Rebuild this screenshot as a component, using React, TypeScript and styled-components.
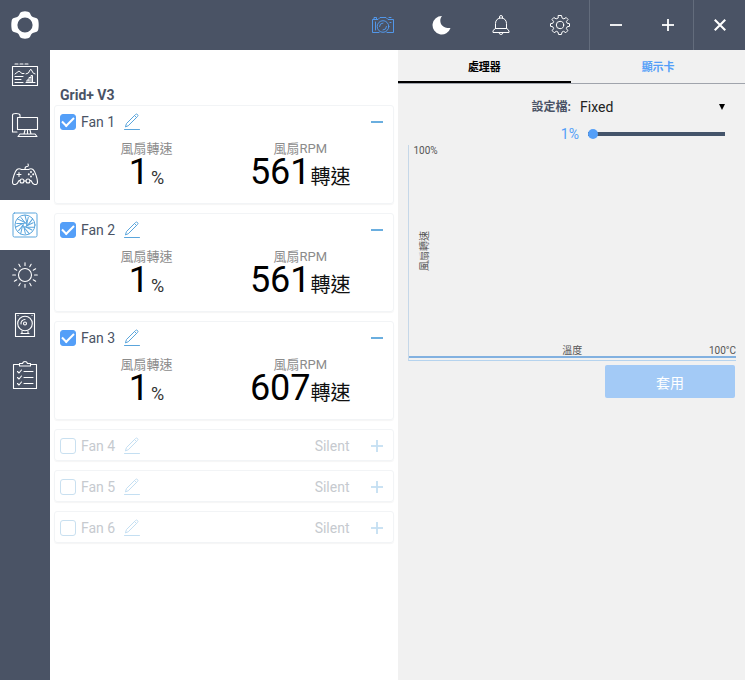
import React, { useState } from "react";
import styled, { createGlobalStyle, css } from "styled-components";

const slate = "#4a5365";
const blue = "#549ff8";
const skyBlue = "#5aa5dc";

const GlobalStyle = createGlobalStyle`
  * { box-sizing: border-box; }
  body {
    margin: 0;
    font-family: Roboto, "Noto Sans CJK TC", sans-serif;
    font-size: 14px;
    color: ${slate};
    background: #fff;
  }
  button, select, input { font: inherit; color: inherit; margin: 0; }
  button { border: 0; padding: 0; background: none; cursor: pointer; }
  svg { display: block; }
`;

const Shell = styled.div`
  min-height: 100vh;
  display: flex;
  flex-direction: column;
`;

const TopBar = styled.header`
  height: 50px;
  display: flex;
  background: ${slate};
  color: #fff;
`;

const Brand = styled.a`
  width: 50px;
  display: grid;
  place-items: center;
  margin-right: auto;
`;

const ToolButton = styled.button<{ $active?: boolean }>`
  width: 59px;
  display: grid;
  place-items: center;
  color: ${(p) => (p.$active ? blue : "#fff")};
`;

const WindowButton = styled.button<{ $divided?: boolean }>`
  width: 52px;
  display: grid;
  place-items: center;
  border-left: 1px solid ${(p) => (p.$divided ? "#636c7c" : "transparent")};
`;

const Body = styled.div`
  flex: 1;
  display: flex;
`;

const SideNav = styled.nav`
  width: 50px;
  flex: none;
  display: flex;
  flex-direction: column;
  background: ${slate};
`;

const NavLink = styled.a<{ $active?: boolean }>`
  height: 50px;
  display: grid;
  place-items: center;
  color: ${(p) => (p.$active ? skyBlue : "#fff")};
  background: ${(p) => (p.$active ? "#fff" : "transparent")};
`;

const Columns = styled.main`
  flex: 1;
  display: grid;
  grid-template-columns: 1fr 1fr;
`;

const FanPanel = styled.section`
  padding: 36px 4px 16px;
`;

const DeviceTitle = styled.h1`
  margin: 0;
  padding-left: 6px;
  font-size: 14px;
  line-height: 19px;
  font-weight: 700;
`;

const FanList = styled.div`
  display: flex;
  flex-direction: column;
  gap: 9px;
`;

const FanCard = styled.article<{ $enabled: boolean }>`
  border: 1px solid #f2f4f6;
  border-radius: 3px;
  box-shadow: 0 1px 1px #f6f6f6;
  padding: 0 8px 0 5px;
  ${(p) =>
    p.$enabled
      ? css`
          height: 99px;
        `
      : css`
          height: 32px;
          color: #c6cacf;
        `}
`;

const FanHead = styled.div`
  height: 32px;
  display: flex;
  align-items: center;
`;

const FanLabel = styled.label`
  display: flex;
  align-items: center;
  gap: 5px;
  width: 64px;
`;

const Tick = styled.input`
  appearance: none;
  width: 16px;
  height: 16px;
  border-radius: 3px;
  border: 1px solid #c9e0f0;
  background: #fff;
  display: grid;
  place-items: center;
  &:checked {
    border-color: ${blue};
    background: ${blue};
  }
  &:checked::before {
    content: "";
    width: 10px;
    height: 5px;
    margin-bottom: 3px;
    border: solid #fff;
    border-width: 0 0 2px 2px;
    transform: rotate(-45deg);
  }
`;

const IconButton = styled.button<{ $faded: boolean }>`
  width: 16px;
  height: 18px;
  display: grid;
  place-items: center;
  color: ${skyBlue};
  opacity: ${(p) => (p.$faded ? 0.35 : 1)};
`;

const Mode = styled.span`
  margin-left: auto;
  margin-right: 19px;
`;

const Toggle = styled(IconButton)`
  margin-left: ${(p) => (p.$faded ? "0" : "auto")};
`;

const Readings = styled.dl`
  margin: 0;
  padding-right: 17px;
  display: grid;
  grid-template-columns: 173px 1fr;
`;

const Reading = styled.div`
  display: flex;
  flex-direction: column;
  align-items: center;
`;

const ReadingName = styled.dt`
  padding-top: 3px;
  font-size: 13px;
  line-height: 16px;
  color: #8b8b8b;
`;

const ReadingValue = styled.dd`
  margin: 0;
  display: flex;
  align-items: baseline;
  font-size: 36px;
  line-height: 30px;
  color: #000;
`;

const Unit = styled.small<{ $large?: boolean }>`
  font-size: ${(p) => (p.$large ? "20px" : "18px")};
  line-height: 20px;
  margin-left: ${(p) => (p.$large ? "0" : "2px")};
  color: ${(p) => (p.$large ? "#111" : "#333")};
`;

const CurvePanel = styled.section`
  background: #f1f1f1;
`;

const Tabs = styled.div`
  display: flex;
  height: 34px;
  border-bottom: 1px solid #a0a4ac;
`;

const Tab = styled.button<{ $active: boolean }>`
  flex: 1;
  height: 33px;
  font-size: 11px;
  font-weight: 700;
  color: ${(p) => (p.$active ? "#000" : blue)};
  border-bottom: 2px solid ${(p) => (p.$active ? "#000" : "transparent")};
`;

const Settings = styled.div`
  padding: 13px 20px 0 10px;
  display: grid;
  grid-template-columns: 1fr 145px;
  align-items: center;
  justify-items: end;
`;

const ProfileLabel = styled.label`
  font-size: 12px;
  line-height: 20px;
  font-weight: 700;
  padding-right: 9px;
`;

const SelectWrap = styled.div`
  width: 145px;
  height: 20px;
  display: flex;
  align-items: center;
  color: #222;
  svg { margin-left: -6px; pointer-events: none; }
`;

const Select = styled.select`
  appearance: none;
  flex: 1;
  border: 0;
  padding: 0;
  background: none;
  line-height: 20px;
`;

const SpeedValue = styled.output`
  font-size: 14px;
  line-height: 34px;
  padding-right: 1px;
  color: ${blue};
`;

const Slider = styled.input`
  appearance: none;
  width: 137px;
  height: 10px;
  background: none;
  &::-webkit-slider-runnable-track {
    height: 4px;
    background: #44546a;
  }
  &::-webkit-slider-thumb {
    appearance: none;
    width: 10px;
    height: 10px;
    margin-top: -3px;
    border-radius: 50%;
    background: ${blue};
  }
`;

const Chart = styled.figure`
  height: 216px;
  margin: -6px 9px 0 10px;
  display: flex;
  flex-direction: column;
  justify-content: space-between;
  border-left: 1px solid #c5d7e8;
  border-bottom: 1px solid #b5d3ee;
  font-size: 10px;
  line-height: 10px;
  color: #555;
`;

const TopMark = styled.span`
  padding: 1px 0 0 5px;
`;

const SpeedAxis = styled.span`
  align-self: flex-start;
  margin-left: 11px;
  writing-mode: vertical-rl;
  text-orientation: sideways;
  transform: rotate(180deg);
`;

const TempAxis = styled.div`
  display: grid;
  grid-template-columns: 1fr auto 1fr;
  margin-bottom: 2px;
  border-bottom: 2px solid #82b1e0;
`;

const TempName = styled.span`
  grid-column: 2;
`;

const TempMax = styled.span`
  justify-self: end;
`;

const Apply = styled.button`
  display: block;
  width: 130px;
  height: 33px;
  margin: 4px 10px 0 auto;
  border-radius: 2px;
  background: #a3caf6;
  color: #fff;
`;

const line = {
  fill: "none",
  stroke: "currentColor",
  strokeWidth: 1.1,
  strokeLinecap: "round" as const,
  strokeLinejoin: "round" as const,
};

const Logo = () => (
  <svg width="28" height="28" viewBox="-14 -14 28 28" aria-hidden="true">
    <path
      fill="#fff"
      fillRule="evenodd"
      d="M-3-13.300Q0-14.100 3-13.300C6.500-12.200 4.500-9.800 7.800-8C9.800-7 12.500-7.500 13.300-4.500Q14.100 0 13.300 4.500C12.500 7.500 9.800 7 7.800 8C4.500 9.800 6.500 12.200 3 13.300Q0 14.100-3 13.300C-6.500 12.200-4.500 9.800-7.800 8C-9.800 7-12.500 7.500-13.300 4.500Q-14.100 0-13.300-4.500C-12.500-7.500-9.800-7-7.800-8C-4.500-9.800-6.500-12.200-3-13.300ZM0-7.600A7.600 7.600 0 1 0 0 7.600A7.600 7.600 0 1 0 0-7.600Z"
    />
  </svg>
);

const Camera = () => (
  <svg width="24" height="20" viewBox="0 0 24 20" {...line} strokeWidth={0.9}>
    <path d="M8 17.500H1.500V4.500H7L9 2.500H15L17 4.500H22.500V17.500H16M3 4V2.500H5.500V4" />
    <circle cx="12" cy="11.500" r="5.800" />
    <path d="M8.500 11.500A3.500 3.500 0 0 1 12 8M15.500 11.500A3.500 3.500 0 0 1 12 15M19 7.500H20M4.500 7V15M18 2.500H20" />
  </svg>
);

const Moon = () => (
  <svg width="20" height="20" viewBox="0 0 20 20">
    <path fill="currentColor" d="M10 1C6.500 5 8 13.500 18.500 13A9.200 9.200 0 1 1 10 1Z" />
  </svg>
);

const Bell = () => (
  <svg width="20" height="22" viewBox="0 0 20 22" {...line} strokeWidth={1}>
    <path d="M8.500 4V3A1.500 1.500 0 0 1 11.500 3V4M4.500 14V9.500C4.500 6 7 4 10 4S15.500 6 15.500 9.500V14L18 17V18.500H2V17ZM4.500 14.500H15.500M8 18.500A2 2 0 0 0 12 18.500" />
  </svg>
);

const Gear = () => (
  <svg width="22" height="22" viewBox="-11 -11 22 22" {...line} strokeWidth={1}>
    <path d="M-1.500-9.500H1.500L2.100-6.900L3.900-6.100L6.200-7.500L8-5.500L6.400-3.500L7.100-1.800L9.500-1.300V1.300L7.100 1.800L6.400 3.500L7.800 5.700L5.800 7.700L3.600 6.300L2 7.100L1.400 9.500H-1.400L-2 7.100L-3.600 6.300L-5.800 7.700L-7.800 5.700L-6.400 3.500L-7.100 1.800L-9.500 1.300V-1.300L-7.100-1.800L-6.400-3.500L-8-5.500L-6.200-7.500L-3.900-6.100L-2.100-6.900Z" />
    <circle r="3.700" />
  </svg>
);

const Cross = ({ kind, size }: { kind: "minus" | "plus" | "close"; size: number }) => (
  <svg width={size} height={size} viewBox="0 0 12 12" fill="none" stroke="currentColor" strokeWidth="1.800">
    {kind === "close" ? <path d="M1.500 1.500L10.500 10.500M10.500 1.500L1.500 10.500" /> : <path d="M0 6H12" />}
    {kind === "plus" && <path d="M6 0V12" />}
  </svg>
);

const Pencil = () => (
  <svg width="16" height="18" viewBox="0 0 16 18" {...line} strokeWidth={1}>
    <path d="M1.500 13.500L2.500 10.500L11.500 1.500Q12.500 .5 13.500 1.500T13.500 3.500L4.500 12.500ZM10.500 2.500L12.500 4.500M.5 16.500H15.500" />
  </svg>
);

const Dashboard = () => (
  <svg width="28" height="26" viewBox="0 0 28 26" {...line}>
    <path d="M1.500 4.500H26.500V23.500H1.500ZM4 2H7M9 2H12M14 2H17" />
    <path d="M4 12L8 9L11 11.500H13M15 12Q18 12 19 8Q20 6 21 9Q22 12 24 12M4 14.500H12M4 17.500H10M4 20.500H12M16 20.500V18H18V20.500M18 18V15.500H20V20.500M20 15.500V13.500H21.500V20.500M15 20.500H24" strokeWidth="1" />
  </svg>
);

const Computer = () => (
  <svg width="28" height="26" viewBox="0 0 28 26" {...line}>
    <path d="M6 20H1.500V3Q1.500 1.500 5 1.500T9 3V5M6.500 5.500H26.500V17.500H6.500ZM14 18L13 22M19 18L20 22M16.500 18V22M9 22H24L26 24.500H7Z" />
  </svg>
);

const Gamepad = () => (
  <svg width="28" height="24" viewBox="0 0 28 24" {...line}>
    <path d="M14 6Q14 3.500 16 3.500T17 1M6 6.500Q8 5 10.500 6.500H17.500Q20 5 22 6.500C24 8 26.500 16 26.500 19Q26.500 22 23.500 21.500Q21.500 21 20 17.500H19M9 17.500H8Q6.500 21 4.500 21.500Q1.500 22 1.500 19C1.500 16 4 8 6 6.500M13 18H15M8 9.500V13.500M6 11.500H10" />
    <circle cx="11" cy="18" r="2" />
    <circle cx="17" cy="18" r="2" />
    <path d="M20 9V9.100M20 13.500V13.600M17.800 11.300V11.400M22.200 11.300V11.400" strokeWidth="1.900" />
  </svg>
);

const Fan = () => (
  <svg width="26" height="26" viewBox="-13 -13 26 26" {...line} strokeWidth={1}>
    <rect x="-12" y="-12" width="24" height="24" rx="1.500" />
    <circle r="10" />
    {[0, 51, 103, 154, 206, 257, 309].map((turn) => (
      <path key={turn} transform={`rotate(${turn})`} d="M2-1.500L0-9.800M0-2.300L-4-7.500" />
    ))}
    <circle r="2" />
  </svg>
);

const Sun = () => (
  <svg width="26" height="26" viewBox="-13 -13 26 26" {...line}>
    <circle r="6.500" />
    {Array.from({ length: 12 }, (_, i) => (
      <path key={i} transform={`rotate(${i * 30})`} d="M0-9.500V-12.300" />
    ))}
  </svg>
);

const Disk = () => (
  <svg width="22" height="26" viewBox="0 0 22 26" {...line}>
    <path d="M1.500 1.500H20.500V24.500H1.500ZM7 21.500H15M8 19.500V21.500M14 19.500V21.500" />
    <circle cx="11" cy="11.500" r="7.300" />
    <circle cx="11" cy="11.500" r="1.500" />
    <path d="M7 12A4 4 0 0 1 11 7.500M4 3.500H4.100M18 3.500H18.100" />
  </svg>
);

const Checklist = () => (
  <svg width="26" height="30" viewBox="0 0 26 30" {...line}>
    <path d="M7 4.500H1.500V28.500H24.500V4.500H19M7.500 6V3.500H10.500Q11 1.500 13 1.500T15.500 3.500H18.500V6ZM12 11.500H21M12 17.500H21M12 23.500H21M5.500 11.500L7 13L9.500 10M5.500 17.500L7 19L9.500 16M5.500 23.500L7 25L9.500 22" />
  </svg>
);

const navItems = [
  { name: "Dashboard", Icon: Dashboard },
  { name: "PC", Icon: Computer },
  { name: "Games", Icon: Gamepad },
  { name: "Cooling", Icon: Fan },
  { name: "Lighting", Icon: Sun },
  { name: "Storage", Icon: Disk },
  { name: "Tasks", Icon: Checklist },
];

const fans = [
  { name: "Fan 1", rpm: 561 },
  { name: "Fan 2", rpm: 561 },
  { name: "Fan 3", rpm: 607 },
  { name: "Fan 4" },
  { name: "Fan 5" },
  { name: "Fan 6" },
];

const FanEntry = ({ name, rpm }: { name: string; rpm?: number }) => {
  const enabled = rpm !== undefined;
  return (
    <FanCard $enabled={enabled}>
      <FanHead>
        <FanLabel>
          <Tick type="checkbox" defaultChecked={enabled} />
          {name}
        </FanLabel>
        <IconButton $faded={!enabled} aria-label={`Rename ${name}`}>
          <Pencil />
        </IconButton>
        {!enabled && <Mode>Silent</Mode>}
        <Toggle $faded={!enabled} aria-label={enabled ? "Collapse" : "Expand"}>
          <Cross kind={enabled ? "minus" : "plus"} size={12} />
        </Toggle>
      </FanHead>
      {enabled && (
        <Readings>
          <Reading>
            <ReadingName>風扇轉速</ReadingName>
            <ReadingValue>
              1<Unit>%</Unit>
            </ReadingValue>
          </Reading>
          <Reading>
            <ReadingName>風扇RPM</ReadingName>
            <ReadingValue>
              {rpm}
              <Unit $large>轉速</Unit>
            </ReadingValue>
          </Reading>
        </Readings>
      )}
    </FanCard>
  );
};

export default function App() {
  const [speed, setSpeed] = useState(1);
  const [tab, setTab] = useState(0);

  return (
    <Shell>
      <GlobalStyle />
      <TopBar>
        <Brand href="#home" aria-label="Home">
          <Logo />
        </Brand>
        <ToolButton $active aria-label="Screenshot"><Camera /></ToolButton>
        <ToolButton aria-label="Night mode"><Moon /></ToolButton>
        <ToolButton aria-label="Notifications"><Bell /></ToolButton>
        <ToolButton aria-label="Settings"><Gear /></ToolButton>
        <WindowButton $divided aria-label="Minimize"><Cross kind="minus" size={12} /></WindowButton>
        <WindowButton aria-label="Maximize"><Cross kind="plus" size={12} /></WindowButton>
        <WindowButton $divided aria-label="Close"><Cross kind="close" size={14} /></WindowButton>
      </TopBar>
      <Body>
        <SideNav>
          {navItems.map(({ name, Icon }) => (
            <NavLink key={name} href={`#${name.toLowerCase()}`} $active={name === "Cooling"} aria-label={name}>
              <Icon />
            </NavLink>
          ))}
        </SideNav>
        <Columns>
          <FanPanel>
            <DeviceTitle>Grid+ V3</DeviceTitle>
            <FanList>
              {fans.map((fan) => (
                <FanEntry key={fan.name} {...fan} />
              ))}
            </FanList>
          </FanPanel>
          <CurvePanel>
            <Tabs role="tablist">
              {["處理器", "顯示卡"].map((name, i) => (
                <Tab key={name} role="tab" aria-selected={tab === i} $active={tab === i} onClick={() => setTab(i)}>
                  {name}
                </Tab>
              ))}
            </Tabs>
            <Settings>
              <ProfileLabel htmlFor="profile">設定檔:</ProfileLabel>
              <SelectWrap>
                <Select id="profile">
                  <option>Fixed</option>
                </Select>
                <svg width="6" height="6" viewBox="0 0 6 6">
                  <path d="M0 0H6L3 6Z" fill="#000" />
                </svg>
              </SelectWrap>
              <SpeedValue htmlFor="speed">{speed}%</SpeedValue>
              <Slider
                id="speed"
                type="range"
                min={1}
                max={100}
                value={speed}
                aria-label="風扇轉速"
                onChange={(e) => setSpeed(Number(e.target.value))}
              />
            </Settings>
            <Chart>
              <TopMark>100%</TopMark>
              <SpeedAxis>風扇轉速</SpeedAxis>
              <TempAxis>
                <TempName>溫度</TempName>
                <TempMax>100°C</TempMax>
              </TempAxis>
            </Chart>
            <Apply>套用</Apply>
          </CurvePanel>
        </Columns>
      </Body>
    </Shell>
  );
}
